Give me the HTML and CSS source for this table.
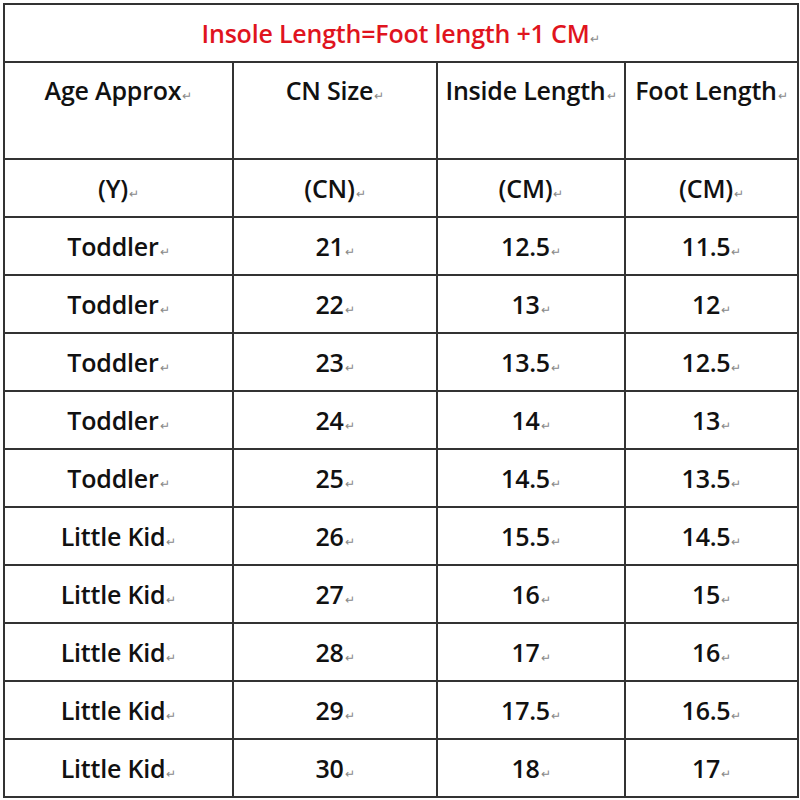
FILE: index.html
```html
<!DOCTYPE html>
<html>
<head>
<meta charset="utf-8">
<link rel="stylesheet" href="styles.css">
</head>
<body>
<div class="wrap">
<table class="size-table">
  <colgroup>
    <col class="c1"><col class="c2"><col class="c3"><col class="c4">
  </colgroup>
  <tr class="title-row"><td colspan="4" class="title">Insole Length=Foot length +1 CM<span class="pm">↵</span></td></tr>
  <tr class="head-row">
    <td>Age Approx<span class="pm">↵</span></td>
    <td>CN Size<span class="pm">↵</span></td>
    <td>Inside Length<span class="pm">↵</span></td>
    <td>Foot Length<span class="pm">↵</span></td>
  </tr>
  <tr><td>(Y)<span class="pm">↵</span></td><td>(CN)<span class="pm">↵</span></td><td>(CM)<span class="pm">↵</span></td><td>(CM)<span class="pm">↵</span></td></tr>
  <tr><td>Toddler<span class="pm">↵</span></td><td>21<span class="pm">↵</span></td><td>12.5<span class="pm">↵</span></td><td>11.5<span class="pm">↵</span></td></tr>
  <tr><td>Toddler<span class="pm">↵</span></td><td>22<span class="pm">↵</span></td><td>13<span class="pm">↵</span></td><td>12<span class="pm">↵</span></td></tr>
  <tr><td>Toddler<span class="pm">↵</span></td><td>23<span class="pm">↵</span></td><td>13.5<span class="pm">↵</span></td><td>12.5<span class="pm">↵</span></td></tr>
  <tr><td>Toddler<span class="pm">↵</span></td><td>24<span class="pm">↵</span></td><td>14<span class="pm">↵</span></td><td>13<span class="pm">↵</span></td></tr>
  <tr><td>Toddler<span class="pm">↵</span></td><td>25<span class="pm">↵</span></td><td>14.5<span class="pm">↵</span></td><td>13.5<span class="pm">↵</span></td></tr>
  <tr><td>Little Kid<span class="pm">↵</span></td><td>26<span class="pm">↵</span></td><td>15.5<span class="pm">↵</span></td><td>14.5<span class="pm">↵</span></td></tr>
  <tr><td>Little Kid<span class="pm">↵</span></td><td>27<span class="pm">↵</span></td><td>16<span class="pm">↵</span></td><td>15<span class="pm">↵</span></td></tr>
  <tr><td>Little Kid<span class="pm">↵</span></td><td>28<span class="pm">↵</span></td><td>17<span class="pm">↵</span></td><td>16<span class="pm">↵</span></td></tr>
  <tr><td>Little Kid<span class="pm">↵</span></td><td>29<span class="pm">↵</span></td><td>17.5<span class="pm">↵</span></td><td>16.5<span class="pm">↵</span></td></tr>
  <tr><td>Little Kid<span class="pm">↵</span></td><td>30<span class="pm">↵</span></td><td>18<span class="pm">↵</span></td><td>17<span class="pm">↵</span></td></tr>
</table>
</div>
</body>
</html>
```
FILE: styles.css
```css
html, body {
  margin: 0;
  padding: 0;
  background: #fff;
}
.wrap {
  padding: 3px 3px 0 3px;
}
.size-table {
  width: 794px;
  border-collapse: collapse;
  table-layout: fixed;
  font-family: "Open Sans", "Liberation Sans", sans-serif;
  font-weight: 600;
  font-size: 25px;
  color: #111;
}
.c1 { width: 229px; }
.c2 { width: 204px; }
.c3 { width: 188px; }
.c4 { width: 173px; }
.size-table td {
  border: 2px solid #333;
  text-align: center;
  vertical-align: middle;
  height: 56px;
  padding: 0;
  white-space: nowrap;
  letter-spacing: -0.2px;
}
.title-row td {
  height: 56px;
  color: #e0141e;
  font-size: 25px;
}
.head-row td {
  height: 85px;
  vertical-align: top;
  padding-top: 10px;
}
.pm {
  font-size: 12px;
  font-weight: 400;
  color: #888;
  margin-left: 1px;
  letter-spacing: 0;
}
```
